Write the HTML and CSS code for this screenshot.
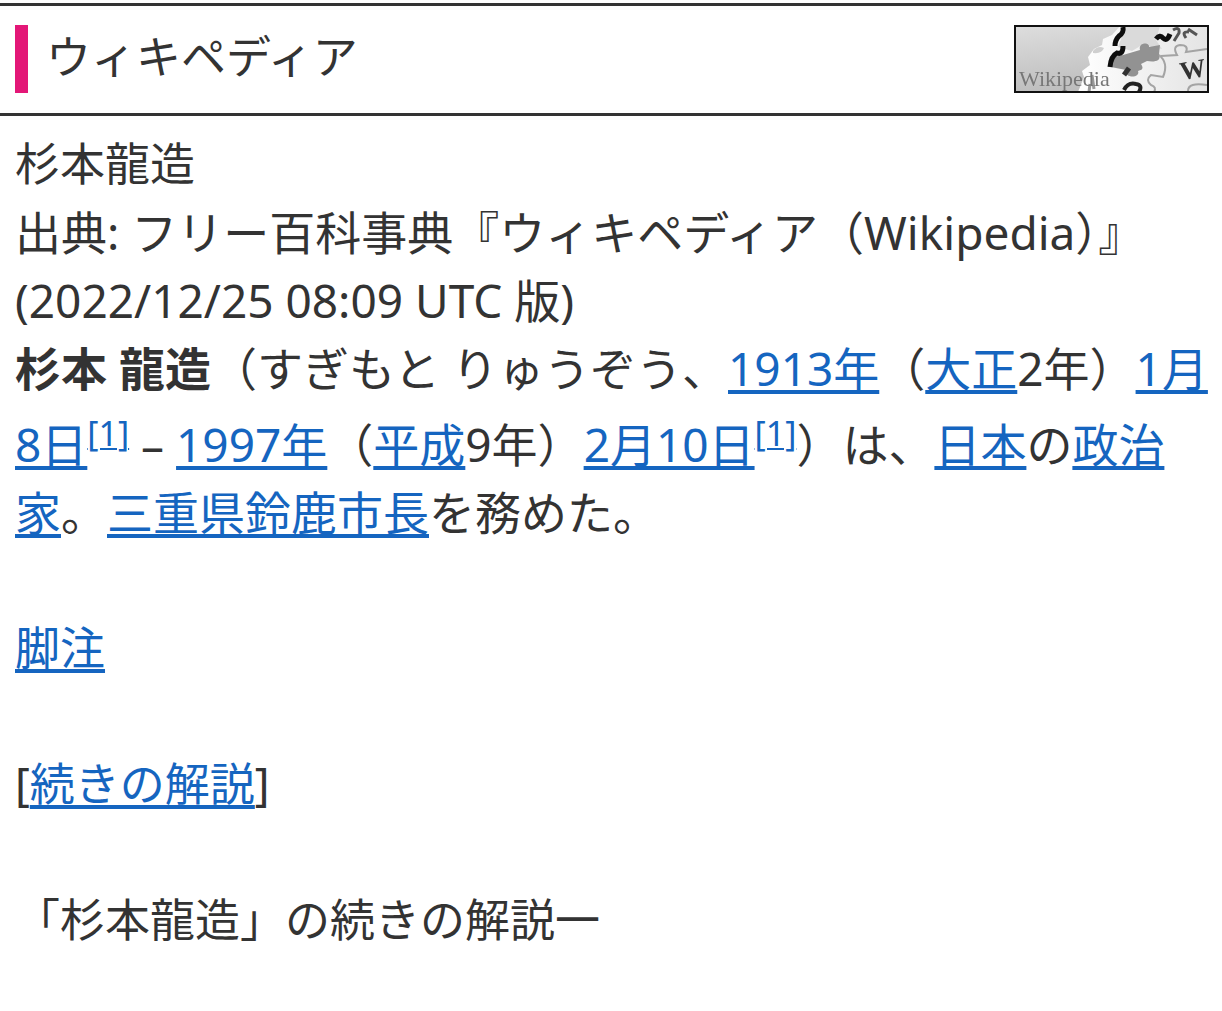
FILE: index.html
```html
<!DOCTYPE html>
<html lang="ja">

<head>
  <meta charset="UTF-8">
  <meta name="viewport" content="width=device-width, initial-scale=1.0">
  <title>杉本龍造 - ウィキペディア</title>
  <link rel="stylesheet" href="styles.css">
</head>

<body>
  <header class="dictHeader">
    <h1 class="dictTitle">ウィキペディア</h1>
    <svg class="dictLogo" viewBox="0 0 195 68" role="img" aria-label="Wikipedia">
      <defs>
        <linearGradient id="bg" x1="0" y1="0" x2="0.3" y2="1">
          <stop offset="0" stop-color="#dedede"></stop>
          <stop offset="1" stop-color="#bcbcbc"></stop>
        </linearGradient>
        <linearGradient id="globe" x1="0" y1="0" x2="1" y2="0">
          <stop offset="0" stop-color="#ffffff"></stop>
          <stop offset="1" stop-color="#e4e4e4"></stop>
        </linearGradient>
        <filter id="soft"><feGaussianBlur stdDeviation="0.6"></feGaussianBlur></filter>
      </defs>
      <rect width="195" height="68" fill="url(#bg)"></rect>
      <g filter="url(#soft)">
        <path d="M64 67 L70 52 L68 46 L76 40 L74 32 L80 24 L88 20 L89 14 L98 10 L106 1 H194 V67 Z" fill="url(#globe)"></path>
        <path d="M112 1 H146 L142 15 L148 24 L128 20 L118 26 L104 22 Z" fill="#dadada"></path>
        <path d="M79 26 q5 -6 11 -3 q-2 6 -11 5 Z" fill="#cfcfcf"></path>
        <!-- missing piece -->
        <path d="M109 30 L126 25 C124 17 136 17 135 22 L146 20 L145 29 C148 37 139 37 133 36 L127 39 C131 45 126 45 124 46 C127 53 110 54 112 45 L97 42 L100 32 Z" fill="#929292"></path>
        <path d="M109 2 Q110 8 105 11 Q101 15 101 21" fill="none" stroke="#111" stroke-width="5"></path>
        <path d="M96 42 Q97 31 103 28 Q109 30 109 21" fill="none" stroke="#111" stroke-width="5"></path>
        <path d="M110 50 L115 43" stroke="#333" stroke-width="5"></path>
        <path d="M110 65 Q114 57 122 59 Q129 60 125 67" fill="none" stroke="#222" stroke-width="4"></path>
        <path d="M142 14 Q146 9 149 13 Q153 17 156 9" fill="none" stroke="#111" stroke-width="5"></path>
        <path d="M159 5 Q166 1 165 8 L160 16 M172 13 Q167 6 175 7 M174 4 L183 10" fill="none" stroke="#555" stroke-width="3"></path>
        <!-- seams between the pieces -->
        <g fill="none" stroke="#a4a4a4" stroke-width="2">
          <path d="M145 30 Q155 38 149 52 Q143 51 137 50 Q131 55 137 60 Q143 62 140 67"></path>
          <path d="M147 31 L163 30 Q158 21 166 20 Q175 20 172 27 L193 24"></path>
          <path d="M174 66 Q174 57 193 60"></path>
        </g>
        <path d="M75 67 L76 59 M78 50 L80 64" stroke="#999" stroke-width="3"></path>
        <text class="logoMark" transform="rotate(-10 168 52)" x="167" y="55">W</text>
        <text class="logoText" x="5" y="61">Wikipedia</text>
      </g>
      <rect x="1" y="1" width="193" height="66" fill="none" stroke="#111" stroke-width="2"></rect>
    </svg>
  </header>

  <main class="content">
    <h2 class="entryTitle">杉本龍造</h2>
    <p class="source">出典: フリー百科事典『ウィキペディア（Wikipedia）』 (2022/12/25 08:09 UTC 版)</p>
    <p class="description"><b>杉本 龍造</b>（すぎもと りゅうぞう、<a href="#">1913年</a>（<a href="#">大正</a>2年）<a href="#">1月8日</a><sup><a href="#note">[1]</a></sup> – <a href="#">1997年</a>（<a href="#">平成</a>9年）<a href="#">2月10日</a><sup><a href="#note">[1]</a></sup>）は、<a href="#">日本</a>の<a href="#">政治家</a>。<a href="#">三重県</a><a href="#">鈴鹿市長</a>を務めた。</p>
    <p class="section" id="note"><a href="#">脚注</a></p>
    <p class="section">[<a href="#">続きの解説</a>]</p>
    <p class="section">「杉本龍造」の続きの解説一</p>
  </main>
</body>

</html>
```
FILE: styles.css
```css
body {
  margin: 0;
  background-color: #fff;
  color: #333;
  font-family: "Noto Sans", "Noto Sans CJK JP", sans-serif;
  font-size: 46px;
  line-height: 68px;
}

h1,
h2,
p {
  margin: 0;
}

h1,
h2,
.section {
  font-size: 45px;
  font-weight: normal;
}

a {
  color: #1565c0;
  text-decoration-thickness: 4px;
  text-underline-offset: 4px;
}

.dictHeader {
  display: flex;
  justify-content: space-between;
  align-items: center;
  margin-top: 3px;
  padding: 19px 13px 20px 15px;
  border-top: 3px solid #333;
  border-bottom: 3px solid #333;
}

.dictTitle {
  padding: 0 0 4px 18px;
  border-left: 13px solid #e31777;
  line-height: 64px;
}

.dictLogo {
  width: 195px;
  height: 68px;
}

.logoText {
  fill: #777;
  font-family: "Liberation Serif", serif;
  font-size: 22px;
}

.logoMark {
  fill: #333;
  font-family: "Liberation Serif", serif;
  font-size: 26px;
  font-weight: bold;
}

.content {
  padding: 14px 12px 14px 15px;
}

sup {
  font-size: 34px;
  line-height: 62px;
}

sup a {
  text-decoration-thickness: 2px;
  text-underline-offset: 2px;
}

.section {
  margin-top: 68px;
}
```
